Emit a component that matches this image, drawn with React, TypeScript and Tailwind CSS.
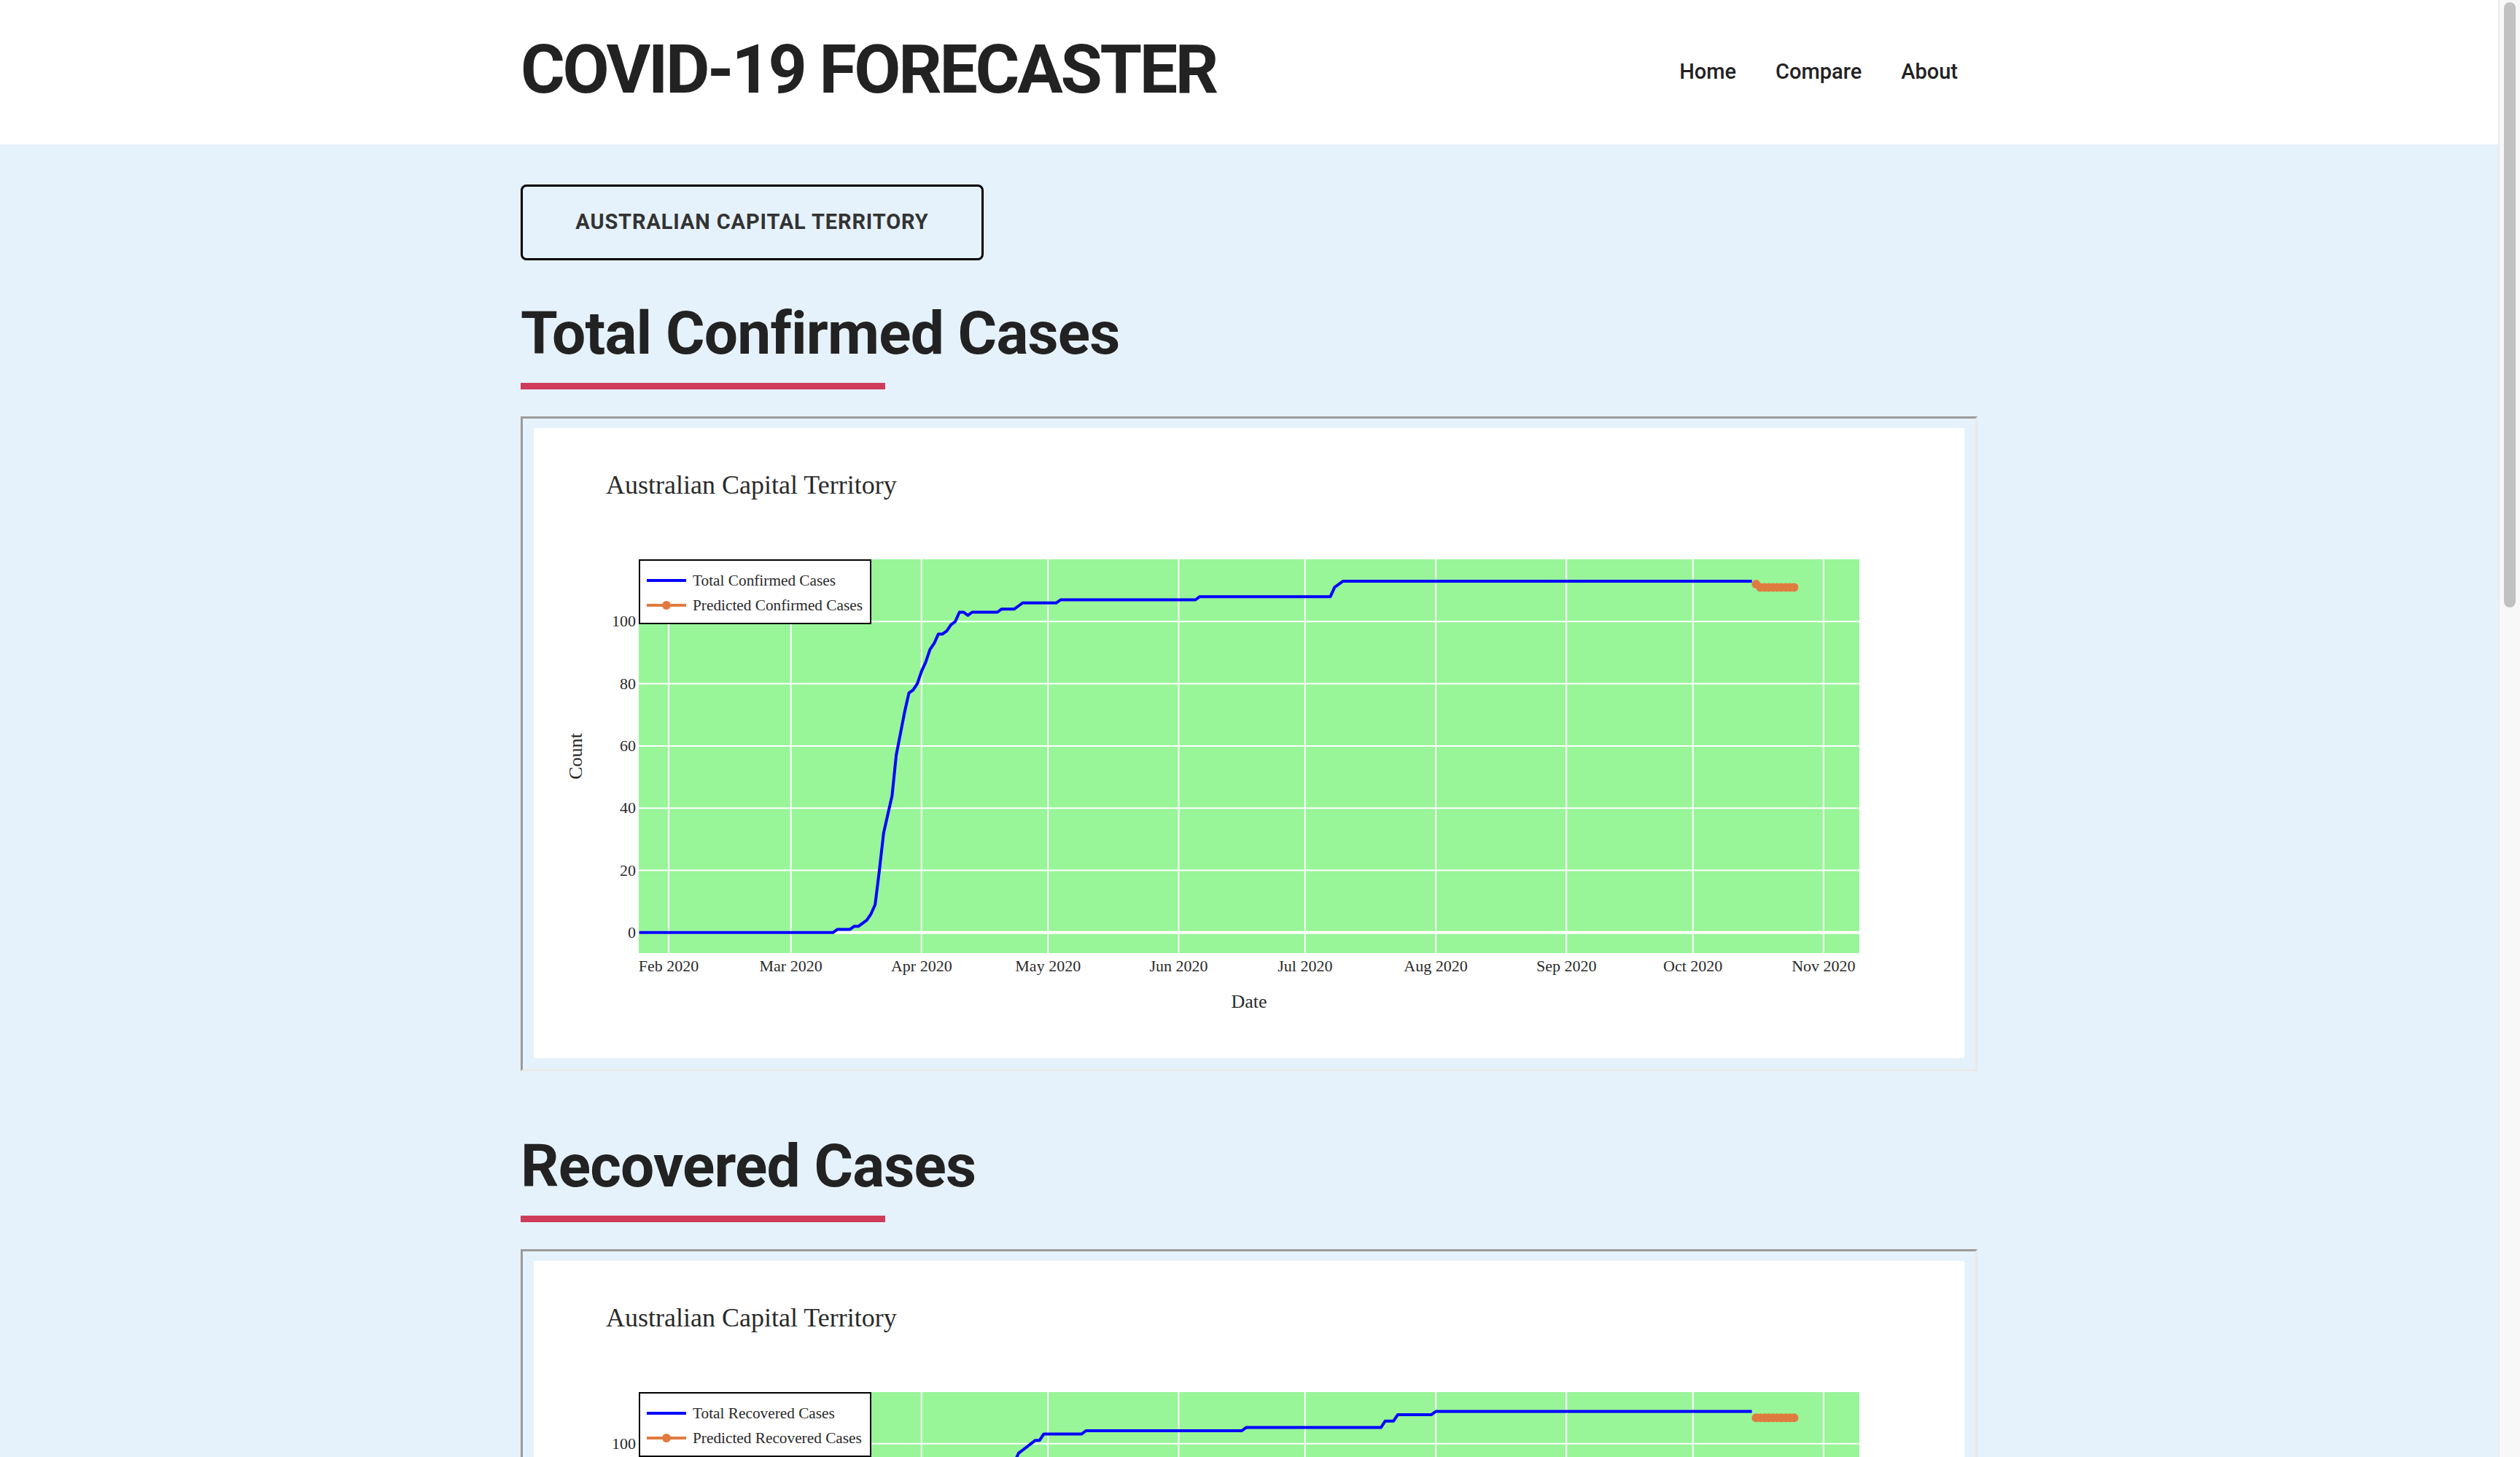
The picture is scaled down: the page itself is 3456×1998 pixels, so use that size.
import React from "react";

type Pt = [number, number];

const SERIF = "'Liberation Serif', 'Times New Roman', serif";

function hold(breaks: Pt[], start: number, end: number): Pt[] {
  const out: Pt[] = [];
  let i = 0;
  let v = breaks[0][1];
  for (let d = start; d <= end; d++) {
    while (i < breaks.length && breaks[i][0] <= d) {
      v = breaks[i][1];
      i++;
    }
    out.push([d, v]);
  }
  return out;
}

function interp(breaks: Pt[], start: number, end: number): Pt[] {
  const out: Pt[] = [];
  for (let d = start; d <= end; d++) {
    let v = breaks[breaks.length - 1][1];
    for (let i = 0; i < breaks.length - 1; i++) {
      const [a, va] = breaks[i];
      const [b, vb] = breaks[i + 1];
      if (d >= a && d <= b) {
        v = Math.round(va + ((vb - va) * (d - a)) / (b - a));
        break;
      }
    }
    out.push([d, v]);
  }
  return out;
}

const confirmed = hold(
  [
    [-7, 0], [40, 1], [44, 2], [46, 3], [47, 4], [48, 6], [49, 9], [50, 20], [51, 32], [52, 38],
    [53, 44], [54, 57], [55, 64], [56, 71], [57, 77], [58, 78], [59, 80], [60, 84], [61, 87],
    [62, 91], [63, 93], [64, 96], [66, 97], [67, 99], [68, 100], [69, 103], [71, 102], [72, 103],
    [79, 104], [83, 105], [84, 106], [93, 107], [126, 108], [158, 111], [159, 112], [160, 113],
  ],
  -7,
  257
);

const recovered = interp(
  [
    [-7, 0], [50, 0], [52, 1], [56, 3], [60, 8], [64, 18], [68, 36], [72, 57], [76, 74], [80, 88],
    [82, 94], [83, 97], [86, 100], [87, 101], [88, 101], [89, 103], [98, 103], [99, 104], [136, 104],
    [137, 105], [169, 105], [170, 107], [172, 107], [173, 109], [181, 109], [182, 110], [257, 110],
  ],
  -7,
  257
);

const deaths = hold([[-7, 0], [56, 1], [64, 2], [71, 3]], -7, 257);

const active: Pt[] = confirmed.map(([d, v], i) => [d, Math.max(0, v - recovered[i][1] - deaths[i][1])]);

const predDays = Array.from({ length: 10 }, (_, i) => 258 + i);
const confirmedPred: Pt[] = predDays.map((d) => [d, d === 258 ? 112 : 111]);
const recoveredPred: Pt[] = predDays.map((d) => [d, 108]);
const deathsPred: Pt[] = predDays.map((d) => [d, 3]);
const activePred: Pt[] = predDays.map((d, i) => [d, confirmedPred[i][1] - recoveredPred[i][1] - deathsPred[i][1]]);

const MONTHS: [string, number][] = [
  ["Feb 2020", 0],
  ["Mar 2020", 29],
  ["Apr 2020", 60],
  ["May 2020", 90],
  ["Jun 2020", 121],
  ["Jul 2020", 151],
  ["Aug 2020", 182],
  ["Sep 2020", 213],
  ["Oct 2020", 243],
  ["Nov 2020", 274],
];

type ChartProps = {
  id: string;
  actual: Pt[];
  predicted: Pt[];
  names: [string, string];
  yRange: [number, number];
  yTicks: number[];
  legendW: number;
};

function Chart({ id, actual, predicted, names, yRange, yTicks, legendW }: ChartProps) {
  const W = 1962;
  const H = 864;
  const X0 = 144;
  const X1 = 1818;
  const Y0 = 180;
  const Y1 = 720;
  const D0 = -7.09;
  const D1 = 282.5;
  const xm = (d: number) => X0 + ((d - D0) * (X1 - X0)) / (D1 - D0);
  const ym = (v: number) => Y1 - ((v - yRange[0]) * (Y1 - Y0)) / (yRange[1] - yRange[0]);
  const path = (pts: Pt[]) =>
    pts.map(([d, v], i) => `${i ? "L" : "M"}${xm(d).toFixed(1)},${ym(v).toFixed(1)}`).join("");
  const text = "#2a2a2a";
  return (
    <svg width={W} height={H} className="block" fontFamily={SERIF}>
      <defs>
        <clipPath id={id}>
          <rect x={X0} y={Y0} width={X1 - X0} height={Y1 - Y0} />
        </clipPath>
      </defs>
      <text x={99} y={90} fontSize={36} fill={text}>
        Australian Capital Territory
      </text>
      <rect x={X0} y={Y0} width={X1 - X0} height={Y1 - Y0} fill="#98f598" />
      {MONTHS.map(([l, d]) => (
        <line key={l} x1={xm(d)} x2={xm(d)} y1={Y0} y2={Y1} stroke="#ffffff" strokeWidth={2} />
      ))}
      {yTicks
        .filter((t) => t !== 0)
        .map((t) => (
          <line key={t} x1={X0} x2={X1} y1={ym(t)} y2={ym(t)} stroke="#ffffff" strokeWidth={2} />
        ))}
      <line x1={X0} x2={X1} y1={ym(0)} y2={ym(0)} stroke="#ffffff" strokeWidth={4} />
      <g clipPath={`url(#${id})`}>
        <path d={path(actual)} fill="none" stroke="#0000ff" strokeWidth={4} strokeLinejoin="round" />
        <path d={path(predicted)} fill="none" stroke="#e07b3f" strokeWidth={4} strokeLinejoin="round" />
        {predicted.map(([d, v]) => (
          <circle key={d} cx={xm(d)} cy={ym(v)} r={6} fill="#e07b3f" />
        ))}
      </g>
      {yTicks.map((t) => (
        <text key={t} x={140} y={ym(t) + 7} fontSize={22} fill={text} textAnchor="end">
          {String(t)}
        </text>
      ))}
      {MONTHS.map(([l, d]) => (
        <text key={l} x={xm(d)} y={745} fontSize={22} fill={text} textAnchor="middle">
          {l}
        </text>
      ))}
      <text x={(X0 + X1) / 2} y={795} fontSize={26} fill={text} textAnchor="middle">
        Date
      </text>
      <text
        x={57}
        y={450}
        fontSize={26}
        fill={text}
        textAnchor="middle"
        dominantBaseline="central"
        transform="rotate(-90 57 450)"
      >
        Count
      </text>
      <rect x={X0 + 1} y={Y0 + 1} width={legendW - 2} height={87} fill="#ffffff" stroke="#000000" strokeWidth={2} />
      <line x1={155} x2={209} y1={209} y2={209} stroke="#0000ff" strokeWidth={4} />
      <text x={218} y={216} fontSize={21.3} fill={text}>
        {names[0]}
      </text>
      <line x1={155} x2={209} y1={243} y2={243} stroke="#e07b3f" strokeWidth={4} />
      <circle cx={182} cy={243} r={6} fill="#e07b3f" />
      <text x={218} y={250} fontSize={21.3} fill={text}>
        {names[1]}
      </text>
    </svg>
  );
}

type Section = ChartProps & { heading: string };

const SECTIONS: Section[] = [
  {
    id: "clip-confirmed",
    heading: "Total Confirmed Cases",
    actual: confirmed,
    predicted: confirmedPred,
    names: ["Total Confirmed Cases", "Predicted Confirmed Cases"],
    yRange: [-6.6, 120],
    yTicks: [0, 20, 40, 60, 80, 100],
    legendW: 319,
  },
  {
    id: "clip-recovered",
    heading: "Recovered Cases",
    actual: recovered,
    predicted: recoveredPred,
    names: ["Total Recovered Cases", "Predicted Recovered Cases"],
    yRange: [-6.3, 116],
    yTicks: [0, 20, 40, 60, 80, 100],
    legendW: 319,
  },
  {
    id: "clip-deaths",
    heading: "Deaths",
    actual: deaths,
    predicted: deathsPred,
    names: ["Total Deaths", "Predicted Deaths"],
    yRange: [-0.18, 3.18],
    yTicks: [0, 0.5, 1, 1.5, 2, 2.5, 3],
    legendW: 236,
  },
  {
    id: "clip-active",
    heading: "Active Cases",
    actual: active,
    predicted: activePred,
    names: ["Total Active Cases", "Predicted Active Cases"],
    yRange: [-4.5, 80],
    yTicks: [0, 20, 40, 60],
    legendW: 290,
  },
];

function ScrollBar() {
  return (
    <div className="h-full w-[30px] shrink-0 border-l-[2px] border-[#ebebeb] bg-[#f8f8f8] pt-[3px] pl-[6px]">
      <div className="h-[830px] w-[16px] rounded-full bg-[#c1c1c1]" />
    </div>
  );
}

export default function App() {
  return (
    <div className="flex h-screen font-['Roboto']">
      <div className="h-full min-w-0 flex-1 overflow-y-auto bg-[#e5f2fc] [scrollbar-width:none]">
        <header className="bg-white">
          <div className="mx-auto flex h-[198px] w-[1998px] items-center justify-between">
            <h1 className="mb-[8px] text-[93px] leading-none font-bold tracking-[-0.035em] text-[#222222]">
              COVID-19 FORECASTER
            </h1>
            <nav className="flex items-center">
              {["Home", "Compare", "About"].map((l) => (
                <a key={l} href="#" className="px-[27px] text-[29px] font-medium text-[#222222]">
                  {l}
                </a>
              ))}
            </nav>
          </div>
        </header>
        <main className="mx-auto w-[1998px] pt-[55px] pb-[40px]">
          <button className="flex h-[104px] w-[635px] items-center justify-center rounded-[8px] border-[3px] border-black text-[29px] font-bold tracking-[0.03em] text-[#333333]">
            AUSTRALIAN CAPITAL TERRITORY
          </button>
          <div className="mt-[59px] flex flex-col gap-[89px]">
            {SECTIONS.map((s) => (
              <section key={s.id} className="flex flex-col">
                <h2 className="text-[82px] leading-none font-bold tracking-[-0.01em] text-[#222222]">{s.heading}</h2>
                <div className="mt-[27px] h-[9px] w-[500px] bg-[#d13b5a]" />
                <div className="mt-[37px] border-[3px] border-t-[#9b9b9b] border-l-[#9b9b9b] border-r-[#e9e9e9] border-b-[#e9e9e9] px-[15px] pt-[13px] pb-[15px]">
                  <div className="bg-white">
                    <Chart {...s} />
                  </div>
                </div>
              </section>
            ))}
          </div>
        </main>
      </div>
      <ScrollBar />
    </div>
  );
}
